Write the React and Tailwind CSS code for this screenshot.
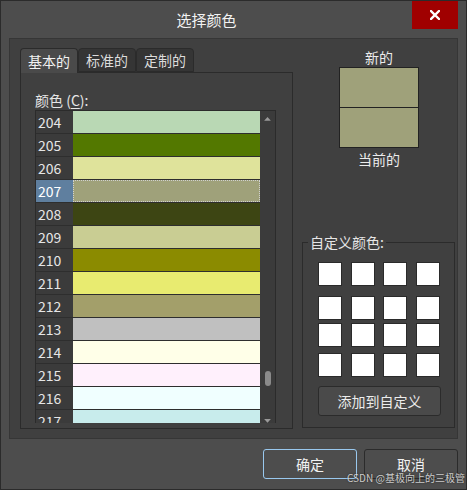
import React from 'react';

const rows = [
  [204, '#b9d8b4'],
  [205, '#537800'],
  [206, '#dfe39b'],
  [207, '#9fa17a'],
  [208, '#3d4513'],
  [209, '#c9cd93'],
  [210, '#8b8b00'],
  [211, '#e8eb70'],
  [212, '#a39f6a'],
  [213, '#c0c0c0'],
  [214, '#ffffe8'],
  [215, '#fff0fc'],
  [216, '#f0ffff'],
  [217, '#c8ecec']
];

const SELECTED = 207;

// custom colour grid: row gaps and column gaps are uneven in the dialog
const gridRows = ['mt-0', 'mt-[10px]', 'mt-[3px]', 'mt-[6px]'];
const gridCols = ['ml-0', 'ml-[9px]', 'ml-[8px]', 'ml-[9px]'];

const App = () => {
  return (
    <div className="relative w-[467px] h-[490px] bg-[#4d4d4d] border border-[#2b2b2b] flex flex-col text-[#ececec] font-['Noto_Sans_CJK_SC','Noto_Sans',sans-serif] select-none">
      {/* title bar */}
      <div className="h-[37px] flex items-start">
        <div className="flex-1 h-[37px] leading-[37px] text-center text-[15px] text-[#f2f2f2]">选择颜色</div>
        <button className="w-[46px] h-[28px] mr-[8px] bg-[#a00000] flex items-center justify-center">
          <svg width="10" height="10" viewBox="0 0 10 10">
            <path d="M1 1 L9 9 M9 1 L1 9" stroke="#ffffff" strokeWidth="2.4" strokeLinecap="square" />
          </svg>
        </button>
      </div>

      {/* main panel */}
      <div className="mx-[8px] h-[401px] bg-[#404040] border border-[#363636] flex pl-[10px] pt-[9px]">
        {/* left: tabs */}
        <div className="w-[273px] flex flex-col">
          <div className="flex h-[24px] text-[14px]">
            <div className="relative z-10 -mb-px w-[58px] h-[25px] bg-[#4a4a4a] border border-b-0 border-[#2b2b2b] rounded-t-[4px] flex items-center justify-center text-[#f2f2f2]">基本的</div>
            <div className="w-[58px] h-[24px] bg-[#353535] border border-[#2b2b2b] rounded-t-[4px] flex items-center justify-center text-[#dcdcdc]">标准的</div>
            <div className="w-[58px] h-[24px] bg-[#353535] border border-[#2b2b2b] rounded-t-[4px] flex items-center justify-center text-[#dcdcdc]">定制的</div>
          </div>
          <div className="h-[357px] border border-[#2b2b2b] bg-[#404040] pl-[14px]">
            <div className="mt-[18px] h-[19px] leading-[19px] text-[14px] text-[#e6e6e6]">
              颜色 (<span className="underline underline-offset-2">C</span>):
            </div>
            <div className="w-[241px] h-[313px] border-x border-t border-[#2b2b2b] flex overflow-hidden">
              <div className="w-[224px] flex flex-col">
                {rows.map(([n, c]) => {
                  const sel = n === SELECTED;
                  return (
                    <div key={n} className="h-[23px] shrink-0 flex border-b border-[#2e2e2e]">
                      <div className={`w-[37px] pl-[2px] text-[14px] leading-[22px] ${sel ? 'bg-[#5f7f9f] text-white' : 'bg-[#3b3b3b] text-[#e6e6e6]'}`}>{n}</div>
                      <div className={`flex-1 ${sel ? 'border border-dotted border-[#d0d0d0]' : ''}`} style={{ backgroundColor: c }} />
                    </div>
                  );
                })}
              </div>
              <div className="w-[15px] bg-[#3b3b3b] flex flex-col items-center">
                <svg className="mt-[6px]" width="7" height="4" viewBox="0 0 7 4">
                  <path d="M0 4 L3.5 0 L7 4 Z" fill="#9a9a9a" />
                </svg>
                <div className="mt-[250px] w-[6px] h-[16px] rounded-full bg-[#8a8a8a]" />
                <svg className="mt-[33px]" width="7" height="4" viewBox="0 0 7 4">
                  <path d="M0 0 L7 0 L3.5 4 Z" fill="#9a9a9a" />
                </svg>
              </div>
            </div>
          </div>
        </div>

        {/* right: preview + custom colours */}
        <div className="w-[164px] flex flex-col">
          <div className="ml-[46px] w-[80px] flex flex-col">
            <div className="h-[18px] leading-[18px] text-[14px] text-center">新的</div>
            <div className="mt-[1px] h-[81px] border border-[#222222] flex flex-col">
              <div className="h-[39px] bg-[#9fa17a]" />
              <div className="h-[1px] bg-[#222222]" />
              <div className="h-[39px] bg-[#9fa17a]" />
            </div>
            <div className="mt-[2px] h-[18px] leading-[18px] text-[14px] text-center">当前的</div>
          </div>

          <fieldset className="mt-[66px] ml-[9px] w-[153px] h-[194px] border border-[#2b2b2b]">
            <legend className="ml-[5px] px-[2px] h-[16px] leading-[16px] text-[14px] text-[#e6e6e6]">自定义颜色:</legend>
            <div className="pl-[15px] pt-[12px]">
              {gridRows.map((rm, r) => (
                <div key={r} className={`flex ${rm}`}>
                  {gridCols.map((cm, c) => (
                    <div key={c} className={`w-[24px] h-[24px] bg-white border border-[#2a2a2a] ${cm}`} />
                  ))}
                </div>
              ))}
              <button className="mt-[9px] w-[123px] h-[30px] bg-[#4a4a4a] border border-[#2b2b2b] rounded-[3px] text-[14px] text-[#ececec]">添加到自定义</button>
            </div>
          </fieldset>
        </div>
      </div>

      {/* bottom buttons */}
      <div className="mt-[10px] flex justify-end gap-[7px] mr-[8px]">
        <button className="w-[94px] h-[30px] border border-[#99c8ee] rounded-[3px] bg-[#4d4d4d] text-[14px] text-[#f2f2f2]">确定</button>
        <button className="w-[94px] h-[30px] border border-[#2b2b2b] rounded-[3px] bg-[#4d4d4d] text-[14px] text-[#f2f2f2]">取消</button>
      </div>

      {/* watermark */}
      <div className="absolute left-[346px] top-[470px] text-[10px] leading-[14px] text-white/75 [text-shadow:0_0_2px_rgba(0,0,0,0.6)] whitespace-nowrap">CSDN @基极向上的三极管</div>
    </div>
  );
};

export default App;
